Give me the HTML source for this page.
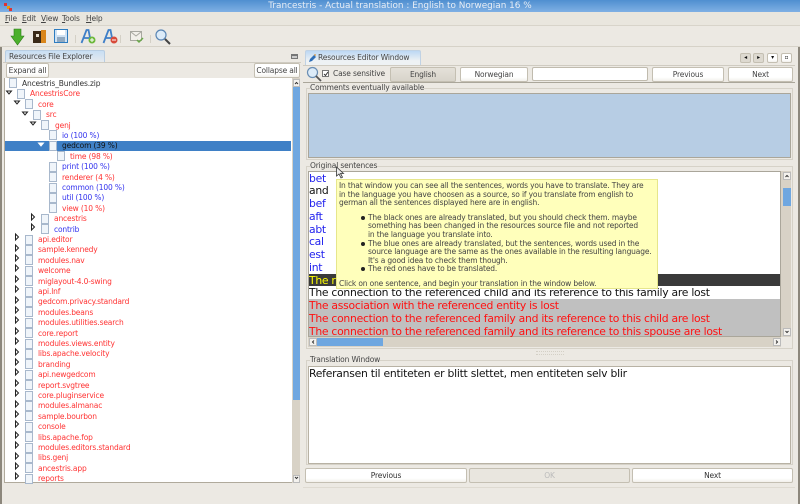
<!DOCTYPE html>
<html><head><meta charset="utf-8"><style>
html,body{margin:0;padding:0;width:800px;height:504px;overflow:hidden;background:#ece9e3;font-family:"DejaVu Sans","Liberation Sans",sans-serif;font-size:7.5px;letter-spacing:-.15px;color:#444}
.a{position:absolute;white-space:nowrap}
.r{position:absolute;height:10.4px;line-height:10.4px;white-space:nowrap;font-size:7.5px;margin-top:.7px}
.f{position:absolute;width:8px;height:10px;background:#f0f5fa;border:1px solid #a8b8cc;box-sizing:border-box}
.n{color:#f33}.b{color:#33e}.k{color:#333}
.btn{position:absolute;box-sizing:border-box;border:1px solid #c4bfb2;border-radius:2px;background:linear-gradient(#fff,#fff 70%,#f2f0ec);text-align:center;color:#444;font-size:7.5px;white-space:nowrap;overflow:hidden}
.s{position:absolute;left:309px;width:471px;height:12.750px;line-height:12.750px;font-size:10.800px;letter-spacing:-.27px;white-space:nowrap;overflow:hidden}
.tt{position:absolute;font-size:7.5px;color:#444;white-space:nowrap;line-height:9px}
.bul{position:absolute;width:4px;height:4px;border-radius:50%;background:#222;left:361px}
.m{position:absolute;top:14px;line-height:10px;font-size:7.5px;color:#444}
</style></head><body>
<div class="a" style="left:0;top:0;width:800px;height:12px;background:linear-gradient(#4f8fd0,#7fb0e4)"></div>
<svg class="a" style="left:3px;top:2px" width="10" height="10"><rect x="1" y="1" width="3" height="3" fill="#d33"/><rect x="4" y="4" width="3" height="3" fill="#e90"/><rect x="6" y="6" width="3" height="3" fill="#d33"/></svg>
<div class="a" style="left:0;width:800px;top:1px;text-align:center;color:#e8eef6;font-size:8.900px;letter-spacing:0;line-height:10px">Trancestris - Actual translation : English to Norwegian 16 %</div>
<div class="a" style="left:0;top:12px;width:800px;height:14px;background:#e9e6de;border-bottom:1px solid #d8d4ca;box-sizing:border-box"></div>
<div class="m" style="left:5px"><u>F</u>ile</div><div class="m" style="left:22px"><u>E</u>dit</div><div class="m" style="left:41px"><u>V</u>iew</div><div class="m" style="left:62px"><u>T</u>ools</div><div class="m" style="left:86px"><u>H</u>elp</div>
<div class="a" style="left:0;top:26px;width:800px;height:21px;background:#ece9e3;border-bottom:1px solid #d6d2c8;box-sizing:border-box"></div>
<svg class="a" style="left:0;top:26px" width="180" height="22">
<path d="M14 3h7v7h3l-6.500 9-6.500-9h3z" fill="#4cb02c" stroke="#2c7a18" stroke-width=".6"/>
<rect x="33" y="5" width="12" height="12" fill="#3a2a18"/><rect x="41" y="4" width="5" height="13" fill="#d9861c"/><rect x="36" y="8" width="3" height="3" fill="#e8e0d0"/>
<rect x="54.500" y="3.500" width="13" height="13" fill="#cfe2f4" stroke="#2d7cc0"/><rect x="57" y="4" width="8" height="5" fill="#fff"/><rect x="57" y="11" width="8" height="5" fill="#8fa8c0"/>
<path d="M81.500 17l5-13h2l2.500 13M84 12h5" fill="none" stroke="#3f7fc8" stroke-width="1.800"/><circle cx="92" cy="14" r="3.500" fill="#6cb83a"/><path d="M90 14h4M92 12v4" stroke="#fff"/>
<path d="M103.500 17l5-13h2l2.500 13M106 12h5" fill="none" stroke="#3f7fc8" stroke-width="1.800"/><circle cx="114" cy="14" r="3.500" fill="#d84a3a"/><path d="M112 14h4" stroke="#fff"/>
<rect x="130.500" y="5.500" width="11" height="9" fill="#f2f0ea" stroke="#a8a8a0"/><path d="M131 6l5 4 5-4" fill="none" stroke="#a8a8a0"/><path d="M137 14l2 2 4-4" fill="none" stroke="#6aa84a" stroke-width="1.500"/>
<circle cx="161" cy="9" r="5" fill="#dcebf8" stroke="#5a86b4" stroke-width="1.200"/><path d="M165 13l5 5" stroke="#444" stroke-width="2"/>
<path d="M75.500 9v8M120.500 9v8M150.500 9v8" stroke="#d4d0c6"/>
</svg>
<div class="a" style="left:0;top:47px;width:2px;height:457px;background:#8c877c"></div>
<div class="a" style="left:798px;top:47px;width:2px;height:457px;background:#8c877c"></div>

<!-- left panel -->
<div class="a" style="left:5px;top:50px;width:100px;height:12px;background:linear-gradient(#c8def4,#e6eaee);border:1px solid #b8cde2;border-bottom:0;box-sizing:border-box;border-radius:2px 2px 0 0;line-height:11px;padding-left:3px;color:#444">Resources File Explorer</div>
<div class="a" style="left:3px;top:62px;width:298px;height:1px;background:#cfcbc1"></div>
<div class="a" style="left:291px;top:54px;width:7px;height:5px;border:1px solid #777;background:#ccc;border-top-width:2px;box-sizing:border-box"></div>
<div class="btn" style="left:6px;top:63px;width:43px;height:15px;line-height:13px">Expand all</div>
<div class="btn" style="left:254px;top:63px;width:46px;height:15px;line-height:13px">Collapse all</div>
<div class="a" style="left:4px;top:78px;width:288px;height:405px;background:#fff;border-left:1px solid #b0aa9c;border-bottom:1px solid #b0aa9c;box-sizing:border-box"></div>
<div class="a" style="left:5px;top:140.500px;width:286px;height:10.500px;background:#3f80c6"></div>
<div class="a" style="left:292px;top:78px;width:8px;height:405px;background:#d8d2c6"></div>
<div class="a" style="left:293px;top:79px;width:7px;height:8px;background:#f4f2ee;border:1px solid #bbb;box-sizing:border-box"></div>
<div class="a" style="left:293px;top:87px;width:7px;height:313px;background:#6fa7e0"></div>
<div class="a" style="left:293px;top:475px;width:7px;height:8px;background:#f4f2ee;border:1px solid #bbb;box-sizing:border-box"></div>
<svg class="a" style="left:293px;top:79px" width="7" height="404"><path d="M2 5l1.500-1.500L5 5M2 398l1.500 1.500L5 398" fill="none" stroke="#333"/></svg>

<div id="tree">
<div class="f" style="left:9px;top:78px"></div><div class="r k" style="left:22px;top:78.300px">Ancestris_Bundles.zip</div>
<div class="f" style="left:17px;top:89px"></div><div class="r n" style="left:30px;top:88.700px">AncestrisCore</div>
<div class="f" style="left:25px;top:99px"></div><div class="r n" style="left:38px;top:99.100px">core</div>
<div class="f" style="left:33px;top:110px"></div><div class="r n" style="left:46px;top:109.500px">src</div>
<div class="f" style="left:41px;top:120px"></div><div class="r n" style="left:55px;top:119.900px">genj</div>
<div class="f" style="left:49px;top:130px"></div><div class="r b" style="left:62px;top:130.300px">io (100 %)</div>
<div class="f" style="left:49px;top:141px"></div><div class="r" style="left:62px;top:140.700px;color:#111">gedcom (39 %)</div>
<div class="f" style="left:57px;top:151px"></div><div class="r n" style="left:70px;top:151.100px">time (98 %)</div>
<div class="f" style="left:49px;top:162px"></div><div class="r b" style="left:62px;top:161.500px">print (100 %)</div>
<div class="f" style="left:49px;top:172px"></div><div class="r n" style="left:62px;top:171.900px">renderer (4 %)</div>
<div class="f" style="left:49px;top:183px"></div><div class="r b" style="left:62px;top:182.300px">common (100 %)</div>
<div class="f" style="left:49px;top:193px"></div><div class="r b" style="left:62px;top:192.700px">util (100 %)</div>
<div class="f" style="left:49px;top:203px"></div><div class="r n" style="left:62px;top:203.100px">view (10 %)</div>
<div class="f" style="left:41px;top:214px"></div><div class="r n" style="left:54px;top:213.500px">ancestris</div>
<div class="f" style="left:41px;top:224px"></div><div class="r b" style="left:54px;top:223.900px">contrib</div>
<div class="f" style="left:25px;top:235px"></div><div class="r n" style="left:38px;top:234.300px">api.editor</div>
<div class="f" style="left:25px;top:245px"></div><div class="r n" style="left:38px;top:244.700px">sample.kennedy</div>
<div class="f" style="left:25px;top:255px"></div><div class="r n" style="left:38px;top:255.100px">modules.nav</div>
<div class="f" style="left:25px;top:266px"></div><div class="r n" style="left:38px;top:265.500px">welcome</div>
<div class="f" style="left:25px;top:276px"></div><div class="r n" style="left:38px;top:275.900px">miglayout-4.0-swing</div>
<div class="f" style="left:25px;top:287px"></div><div class="r n" style="left:38px;top:286.300px">api.lnf</div>
<div class="f" style="left:25px;top:297px"></div><div class="r n" style="left:38px;top:296.700px">gedcom.privacy.standard</div>
<div class="f" style="left:25px;top:307px"></div><div class="r n" style="left:38px;top:307.100px">modules.beans</div>
<div class="f" style="left:25px;top:318px"></div><div class="r n" style="left:38px;top:317.500px">modules.utilities.search</div>
<div class="f" style="left:25px;top:328px"></div><div class="r n" style="left:38px;top:327.900px">core.report</div>
<div class="f" style="left:25px;top:339px"></div><div class="r n" style="left:38px;top:338.300px">modules.views.entity</div>
<div class="f" style="left:25px;top:349px"></div><div class="r n" style="left:38px;top:348.700px">libs.apache.velocity</div>
<div class="f" style="left:25px;top:359px"></div><div class="r n" style="left:38px;top:359.100px">branding</div>
<div class="f" style="left:25px;top:370px"></div><div class="r n" style="left:38px;top:369.500px">api.newgedcom</div>
<div class="f" style="left:25px;top:380px"></div><div class="r n" style="left:38px;top:379.900px">report.svgtree</div>
<div class="f" style="left:25px;top:391px"></div><div class="r n" style="left:38px;top:390.300px">core.pluginservice</div>
<div class="f" style="left:25px;top:401px"></div><div class="r n" style="left:38px;top:400.700px">modules.almanac</div>
<div class="f" style="left:25px;top:411px"></div><div class="r n" style="left:38px;top:411.100px">sample.bourbon</div>
<div class="f" style="left:25px;top:422px"></div><div class="r n" style="left:38px;top:421.500px">console</div>
<div class="f" style="left:25px;top:432px"></div><div class="r n" style="left:38px;top:431.900px">libs.apache.fop</div>
<div class="f" style="left:25px;top:443px"></div><div class="r n" style="left:38px;top:442.300px">modules.editors.standard</div>
<div class="f" style="left:25px;top:453px"></div><div class="r n" style="left:38px;top:452.700px">libs.genj</div>
<div class="f" style="left:25px;top:463px"></div><div class="r n" style="left:38px;top:463.100px">ancestris.app</div>
<div class="f" style="left:25px;top:474px"></div><div class="r n" style="left:38px;top:473.500px">reports</div>
</div>
<svg class="a" style="left:0;top:78px" width="50" height="406">
<g fill="none" stroke="#222" stroke-width="1">
<path d="M6.500 13h5l-2.500 3z M14.500 23h5l-2.500 3z M22.500 34h5l-2.500 3z M30.500 44h5l-2.500 3z"/>
<path d="M38.500 65h5l-2.500 3z" stroke="#fff" fill="#fff"/>
<path d="M31.500 136v6l3-3z M31.500 146v6l3-3z"/>
<path d="M15.500 156v6l3-3z M15.500 167v6l3-3z M15.500 177v6l3-3z M15.500 187v6l3-3z M15.500 198v6l3-3z M15.500 208v6l3-3z M15.500 219v6l3-3z M15.500 229v6l3-3z M15.500 239v6l3-3z M15.500 250v6l3-3z M15.500 260v6l3-3z M15.500 271v6l3-3z M15.500 281v6l3-3z M15.500 291v6l3-3z M15.500 302v6l3-3z M15.500 312v6l3-3z M15.500 323v6l3-3z M15.500 333v6l3-3z M15.500 343v6l3-3z M15.500 354v6l3-3z M15.500 364v6l3-3z M15.500 375v6l3-3z M15.500 385v6l3-3z M15.500 395v6l3-3z"/>
</g></svg>

<!-- right panel -->
<div class="a" style="left:305px;top:50px;width:116px;height:15px;background:linear-gradient(#bcd8f4,#eef2f4 70%);border:1px solid #c0d2e4;border-bottom:0;box-sizing:border-box;border-radius:2px 2px 0 0"></div>
<svg class="a" style="left:307px;top:53px" width="10" height="11"><path d="M2 9l1-3 4-4 2 2-4 4z" fill="#2f6fb8"/><path d="M7 2l1-1 1 1-1 1z" fill="#d9861c"/></svg>
<div class="a" style="left:318px;top:52px;line-height:11px;color:#444">Resources Editor Window</div>
<div class="a" style="left:303px;top:65px;width:492px;height:18px;background:#ece9e3;border-top:1px solid #cfcbc1;border-bottom:1px solid #aaa69a;box-sizing:border-box"></div>
<div class="btn" style="left:740px;top:53px;width:11px;height:10px;background:#ddd9d0;line-height:8px;font-size:6px;color:#111">◂</div>
<div class="btn" style="left:753px;top:53px;width:11px;height:10px;background:#ddd9d0;line-height:8px;font-size:6px;color:#111">▸</div>
<div class="btn" style="left:767px;top:53px;width:11px;height:10px;line-height:8px;font-size:6px;color:#111">▾</div>
<div class="btn" style="left:781px;top:53px;width:11px;height:10px;line-height:8px;font-size:6px;color:#111">▫</div>
<svg class="a" style="left:306px;top:66px" width="16" height="16"><circle cx="6.500" cy="6.500" r="5" fill="#dcebf8" stroke="#6a8eb4" stroke-width="1.200"/><path d="M10 10l5 5" stroke="#555" stroke-width="1.800"/></svg>
<div class="a" style="left:322px;top:70px;width:7px;height:7px;border:1px solid #777;background:#fff;box-sizing:border-box"></div>
<svg class="a" style="left:322px;top:70px" width="8" height="8"><path d="M2 4l1.500 1.500L6 2" fill="none" stroke="#333"/></svg>
<div class="a" style="left:333px;top:69px;line-height:10px;color:#444">Case sensitive</div>
<div class="btn" style="left:390px;top:67px;width:66px;height:15px;line-height:13px;background:linear-gradient(#e4e1d9,#d8d4ca)">English</div>
<div class="btn" style="left:460px;top:67px;width:68px;height:15px;line-height:13px">Norwegian</div>
<div class="a" style="left:532px;top:67px;width:116px;height:14px;background:#fff;border:1px solid #c0bbae;box-sizing:border-box;border-radius:2px"></div>
<div class="btn" style="left:652px;top:67px;width:72px;height:15px;line-height:13px">Previous</div>
<div class="btn" style="left:728px;top:67px;width:65px;height:15px;line-height:13px">Next</div>

<div class="a" style="left:306px;top:88px;width:487px;height:72px;border:1px solid #d6d2c8;box-sizing:border-box"></div>
<div class="a" style="left:310px;top:83px;line-height:10px;color:#444;background:#ece9e3">Comments eventually available</div>
<div class="a" style="left:308px;top:93px;width:483px;height:65px;background:#b7cde4;border:1px solid #aaa69a;box-sizing:border-box"></div>

<div class="a" style="left:306px;top:166px;width:487px;height:183px;border:1px solid #d6d2c8;box-sizing:border-box"></div>
<div class="a" style="left:310px;top:161px;line-height:10px;color:#444;background:#ece9e3">Original sentences</div>
<div class="a" style="left:308px;top:171px;width:473px;height:166px;background:#fff;border:1px solid #aaa69a;box-sizing:border-box"></div>
<div class="a" style="left:309px;top:273.500px;width:471px;height:12.500px;background:#3a3a3a"></div>
<div class="a" style="left:309px;top:299px;width:471px;height:37px;background:#c0c0c0"></div>
<div class="s" style="top:172.500px;color:#22e">bet</div>
<div class="s" style="top:185.250px;color:#111">and</div>
<div class="s" style="top:198px;color:#22e">bef</div>
<div class="s" style="top:210.750px;color:#22e">aft</div>
<div class="s" style="top:223.500px;color:#22e">abt</div>
<div class="s" style="top:236.250px;color:#22e">cal</div>
<div class="s" style="top:249px;color:#22e">est</div>
<div class="s" style="top:261.750px;color:#22e">int</div>
<div class="s" style="top:274.500px;color:#ff0">The reference</div>
<div class="s" style="top:287.250px;color:#111">The connection to the referenced child and its reference to this family are lost</div>
<div class="s" style="top:300px;color:#f11">The association with the referenced entity is lost</div>
<div class="s" style="top:312.750px;color:#f11">The connection to the referenced family and its reference to this child are lost</div>
<div class="s" style="top:325.500px;color:#f11">The connection to the referenced family and its reference to this spouse are lost</div>
<div class="a" style="left:336px;top:179px;width:322px;height:110px;background:#ffffbb;border:1px solid #e6e68c;box-sizing:border-box"></div>
<div class="tt" style="left:339px;top:181px">In that window you can see all the sentences, words you have to translate. They are</div>
<div class="tt" style="left:339px;top:190px">in the language you have choosen as a source, so if you translate from english to</div>
<div class="tt" style="left:339px;top:198px">german all the sentences displayed here are in english.</div>
<div class="bul" style="top:216px"></div>
<div class="tt" style="left:368px;top:213px">The black ones are already translated, but you should check them. maybe</div>
<div class="tt" style="left:368px;top:221px">something has been changed in the resources source file and not reported</div>
<div class="tt" style="left:368px;top:230px">in the language you translate into.</div>
<div class="bul" style="top:242px"></div>
<div class="tt" style="left:368px;top:239px">The blue ones are already translated, but the sentences, words used in the</div>
<div class="tt" style="left:368px;top:247px">source language are the same as the ones available in the resulting language.</div>
<div class="tt" style="left:368px;top:256px">It's a good idea to check them though.</div>
<div class="bul" style="top:267px"></div>
<div class="tt" style="left:368px;top:264px">The red ones have to be translated.</div>
<div class="tt" style="left:339px;top:279px">Click on one sentence, and begin your translation in the window below.</div>
<svg class="a" style="left:335px;top:166px" width="10" height="13"><path d="M1.500 1v9l2.500-2 2 4 1.500-.8-2-3.700h3z" fill="#eee" stroke="#333" stroke-width=".8"/></svg>

<div class="a" style="left:781px;top:171px;width:10px;height:166px;background:#d8d2c6"></div>
<div class="a" style="left:783px;top:172px;width:8px;height:8px;background:#f4f2ee;border:1px solid #bbb;box-sizing:border-box"></div>
<div class="a" style="left:783px;top:188px;width:8px;height:18px;background:#6fa7e0"></div>
<div class="a" style="left:783px;top:328px;width:8px;height:8px;background:#f4f2ee;border:1px solid #bbb;box-sizing:border-box"></div>
<svg class="a" style="left:783px;top:172px" width="8" height="164"><path d="M2.500 5L4 3.500 5.500 5M2.500 159L4 160.500 5.500 159" fill="none" stroke="#333"/></svg>
<div class="a" style="left:308px;top:337px;width:473px;height:10px;background:#d8d2c6"></div>
<div class="a" style="left:309px;top:338px;width:8px;height:8px;background:#f4f2ee;border:1px solid #bbb;box-sizing:border-box"></div>
<div class="a" style="left:317px;top:338px;width:66px;height:8px;background:#6fa7e0"></div>
<div class="a" style="left:773px;top:338px;width:8px;height:8px;background:#f4f2ee;border:1px solid #bbb;box-sizing:border-box"></div>
<svg class="a" style="left:309px;top:338px" width="472" height="8"><path d="M5 2.500L3.500 4 5 5.500M467 2.500L468.500 4 467 5.500" fill="none" stroke="#333"/></svg>
<div class="a" style="left:536px;top:351px;width:28px;height:2px;border-top:1px dotted #d4d0c6;border-bottom:1px dotted #d4d0c6"></div>

<div class="a" style="left:306px;top:360px;width:487px;height:105px;border:1px solid #d6d2c8;box-sizing:border-box"></div>
<div class="a" style="left:310px;top:355px;line-height:10px;color:#444;background:#ece9e3">Translation Window</div>
<div class="a" style="left:308px;top:366px;width:483px;height:98px;background:#fff;border:1px solid #b8b2a4;box-sizing:border-box"></div>
<div class="s" style="top:366.500px;width:478px;height:14px;line-height:13px;letter-spacing:-.25px;color:#111">Referansen til entiteten er blitt slettet, men entiteten selv blir</div>
<div class="btn" style="left:305px;top:468px;width:162px;height:15px;line-height:13px;color:#333">Previous</div>
<div class="btn" style="left:469px;top:468px;width:161px;height:15px;line-height:13px;background:#e9e6df;color:#bbb">OK</div>
<div class="btn" style="left:632px;top:468px;width:161px;height:15px;line-height:13px;color:#333">Next</div>
<div class="a" style="left:303px;top:487px;width:492px;height:1px;background:#dedad1"></div>
</body></html>
